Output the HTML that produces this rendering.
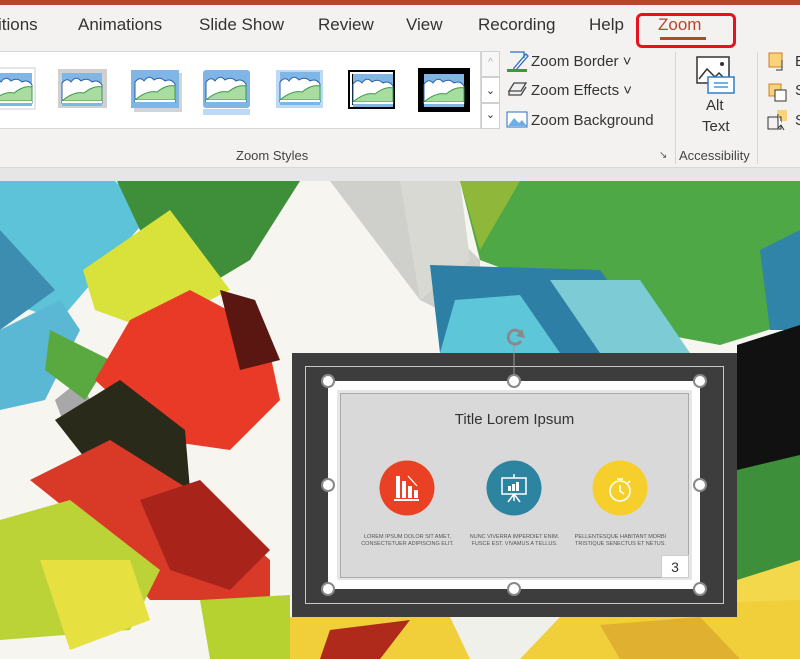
<!DOCTYPE html>
<html><head><meta charset="utf-8"><style>
*{margin:0;padding:0;box-sizing:border-box}
body{width:800px;height:659px;overflow:hidden;background:#f3f2f1;font-family:"Liberation Sans",sans-serif;position:relative}
.a{position:absolute;white-space:nowrap}
.tab{position:absolute;top:15px;font-size:17px;color:#333}
.cmd{position:absolute;font-size:15px;color:#333}
</style></head><body>
<div class="a" style="left:0;top:0;width:800px;height:5px;background:#b7472a"></div>
<div class="tab" style="left:-2px">itions</div>
<div class="tab" style="left:78px">Animations</div>
<div class="tab" style="left:199px">Slide Show</div>
<div class="tab" style="left:318px">Review</div>
<div class="tab" style="left:406px">View</div>
<div class="tab" style="left:478px">Recording</div>
<div class="tab" style="left:589px">Help</div>
<div class="tab" style="left:658px;color:#b7472a">Zoom</div>
<div class="a" style="left:660px;top:37px;width:46px;height:3px;background:#b7472a"></div>
<div class="a" style="left:636px;top:13px;width:100px;height:35px;border:3px solid #e8121e;border-radius:6px"></div>

<div class="a" style="left:-2px;top:51px;width:483px;height:78px;background:#fff;border:1px solid #d6d6d6"></div>
<div class="a" style="left:481px;top:51px;width:19px;height:26px;border:1px solid #d0d0d0;background:#f7f7f7;font-size:10px;color:#aaa;text-align:center;line-height:22px">^</div>
<div class="a" style="left:481px;top:77px;width:19px;height:26px;border:1px solid #d0d0d0;background:#fff;font-size:11px;color:#333;text-align:center;line-height:26px">&#8964;</div>
<div class="a" style="left:481px;top:103px;width:19px;height:26px;border:1px solid #d0d0d0;background:#fff;font-size:11px;color:#333;text-align:center;line-height:22px">&#8964;</div>
<svg class="a" style="left:0;top:50px" width="480" height="80" viewBox="0 50 480 80">
<defs><g id="pic"><rect x="0" y="0" width="40" height="30" fill="#7fb6e6"/><path d="M0 10 Q5 4 9 9 Q14 2 19 8 Q25 4 30 9 Q36 6 40 12 L40 30 L0 30Z" fill="#fff" stroke="#2a5fa8" stroke-width="1"/><path d="M0 28 Q12 18 22 20 Q32 12 40 14 L40 28Z" fill="#a9dca0" stroke="#3a9a4a" stroke-width="1"/><rect x="0" y="28" width="40" height="2" fill="#fff"/><rect x="0" y="30" width="40" height="3" fill="#7fb6e6"/></g></defs>
<rect x="-4" y="68" width="39" height="41" fill="#fff" stroke="#ccc"/><use href="#pic" x="-8" y="73"/>
<rect x="58" y="69" width="49" height="39" fill="#d0d0d0"/><use href="#pic" x="62" y="73"/>
<rect x="134" y="73" width="48" height="39" fill="#aaa" opacity=".5"/><rect x="131" y="70" width="48" height="38" fill="#7fb6e6"/><use href="#pic" x="135" y="72"/>
<rect x="203" y="70" width="47" height="38" rx="3" fill="#7fb6e6"/><use href="#pic" x="206" y="72"/><rect x="203" y="109" width="47" height="6" fill="#bcd9f5"/>
<rect x="276" y="70" width="47" height="38" fill="#bcd9f5"/><use href="#pic" x="280" y="72"/>
<rect x="348" y="70" width="47" height="39" fill="#000"/><rect x="350" y="72" width="43" height="35" fill="#fff"/><rect x="352" y="74" width="39" height="31" fill="#000"/><use href="#pic" x="353" y="74"/>
<rect x="418" y="68" width="52" height="44" fill="#000"/><use href="#pic" x="424" y="74"/>
</svg>
<svg class="a" style="left:506px;top:50px" width="24" height="80"><path d="M4 2 L18 2 L18 8 M8 18 L20 4 L22 6 L10 20 L7 21Z" fill="none" stroke="#2a6fc0" stroke-width="1.3"/><rect x="1" y="19" width="20" height="3" fill="#3a9a3a"/><path d="M3 41 L8 33 L20 33 L15 41Z M3 41 L3 45 L15 45 L20 37" fill="#eee" stroke="#444" stroke-width="1.3"/><rect x="1" y="62" width="20" height="15" fill="#fff" stroke="#2a6fc0"/><path d="M2 76 L8 68 L13 73 L16 70 L21 76Z" fill="#6ab0e6"/></svg>
<div class="cmd" style="left:531px;top:53px">Zoom Border ˅</div>
<div class="cmd" style="left:531px;top:82px">Zoom Effects ˅</div>
<div class="cmd" style="left:531px;top:112px">Zoom Background</div>
<div class="a" style="left:675px;top:52px;width:1px;height:112px;background:#d6d6d6"></div>
<div class="a" style="left:757px;top:52px;width:1px;height:112px;background:#d6d6d6"></div>
<svg class="a" style="left:695px;top:55px" width="45" height="42"><rect x="2" y="2" width="32" height="26" fill="#fff" stroke="#333" stroke-width="1.5"/><path d="M4 24 L12 14 L20 22 L24 18 L32 26" fill="none" stroke="#333" stroke-width="1.5"/><circle cx="27" cy="9" r="2" fill="#333"/><rect x="13" y="22" width="26" height="16" fill="#fff" stroke="#2a7fd0" stroke-width="1.5"/><path d="M19 28h14M19 32h14" stroke="#2a7fd0" stroke-width="1.3"/></svg>
<div class="cmd" style="left:706px;top:97px">Alt</div>
<div class="cmd" style="left:702px;top:118px">Text</div>
<svg class="a" style="left:766px;top:50px" width="34" height="85"><rect x="3" y="3" width="13" height="14" fill="#f9d27a" stroke="#d08020"/><path d="M16 10v10h-6" fill="none" stroke="#333"/><rect x="3" y="34" width="12" height="12" fill="#f9d27a" stroke="#d08020"/><rect x="9" y="40" width="11" height="11" fill="#fff" stroke="#333"/><rect x="11" y="60" width="10" height="11" fill="#f9d27a"/><rect x="2" y="67" width="13" height="12" fill="none" stroke="#333"/><path d="M12 64 L12 78 L15 75 L18 80" fill="#fff" stroke="#333"/></svg>
<div class="a" style="left:795px;top:53px;font-size:15px;color:#333">B</div>
<div class="a" style="left:795px;top:82px;font-size:15px;color:#333">S</div>
<div class="a" style="left:795px;top:112px;font-size:15px;color:#333">S</div>
<div class="a" style="left:236px;top:148px;font-size:13px;color:#444">Zoom Styles</div>
<div class="a" style="left:659px;top:150px;font-size:10px;color:#555">&#8600;</div>
<div class="a" style="left:679px;top:148px;font-size:13px;color:#444">Accessibility</div>
<div class="a" style="left:0;top:167px;width:800px;height:14px;background:#e6e6e6;border-top:1px solid #d8d8d8"></div>

<svg class="a" style="left:0;top:181px" width="800" height="478" viewBox="0 181 800 478">
<rect x="0" y="181" width="800" height="478" fill="#f6f5f0"/>
<polygon points="330,181 400,181 480,260 480,330 420,300" fill="#cfcfcb"/>
<polygon points="0,181 115,181 150,215 60,320 0,300" fill="#5cc3d8"/>
<polygon points="0,230 55,290 0,330" fill="#3d8db0"/>
<polygon points="0,330 60,300 80,330 45,400 0,410" fill="#5bb8d4"/>
<polygon points="55,400 80,380 100,420 70,440" fill="#a8a8a8"/>
<polygon points="117,181 300,181 250,260 200,290 140,230" fill="#3f8f3a"/>
<polygon points="83,270 170,210 200,250 230,290 150,330 95,310" fill="#d8e23a"/>
<polygon points="50,330 110,360 85,400 45,370" fill="#5aa840"/>
<polygon points="130,320 190,290 265,330 280,400 230,450 160,440 95,380" fill="#e83a26"/>
<polygon points="220,290 255,300 280,360 240,370" fill="#5a1610"/>
<polygon points="55,420 120,380 185,430 190,490 110,490" fill="#2a2a1a"/>
<polygon points="30,480 110,440 190,490 270,560 270,600 150,600 80,520" fill="#d93a28"/>
<polygon points="140,500 200,480 270,550 230,590 170,570" fill="#a8241a"/>
<polygon points="0,520 70,500 160,570 130,630 0,640" fill="#bcd338"/>
<polygon points="40,560 130,560 150,620 70,650" fill="#e6e040"/>
<polygon points="200,600 290,595 290,659 210,659" fill="#b5d230"/>
<polygon points="400,181 460,181 470,260 420,300" fill="#d9d9d4"/>
<polygon points="460,181 800,181 800,320 720,345 640,330 560,290 480,260" fill="#4da845"/>
<polygon points="460,181 520,181 480,250" fill="#8fb83a"/>
<polygon points="430,265 600,270 660,353 440,353" fill="#2e7fa6"/>
<polygon points="455,300 520,295 560,353 440,353" fill="#5ec6d9"/>
<polygon points="550,280 640,280 690,353 600,353" fill="#7ccbd5"/>
<polygon points="760,250 800,230 800,330 770,330" fill="#2f84a8"/>
<polygon points="737,345 800,325 800,470 737,480" fill="#111"/>
<polygon points="737,470 800,455 800,580 737,580" fill="#3e8f3a"/>
<polygon points="737,580 800,560 800,659 737,659" fill="#f2d84a"/>
<polygon points="290,617 800,600 800,659 290,659" fill="#f0cf3a"/>
<polygon points="450,617 560,617 520,659 470,659" fill="#f0f0ea"/>
<polygon points="330,630 410,620 380,659 320,659" fill="#b02a1c"/>
<polygon points="600,625 700,617 740,659 620,659" fill="#e0b030"/>
</svg>

<div class="a" style="left:292px;top:353px;width:445px;height:264px;background:#3d3d3d"></div>
<div class="a" style="left:305px;top:366px;width:419px;height:238px;border:1px solid #c8c8c8"></div>
<div class="a" style="left:328px;top:381px;width:372px;height:208px;background:#fff"></div>
<div class="a" style="left:337px;top:390px;width:355px;height:190px;background:#e6e6e6"></div>
<div class="a" style="left:340px;top:393px;width:349px;height:185px;background:#d9d9d9;border:1px solid #a9a9a9"></div>
<div class="a" style="left:340px;top:411px;width:349px;text-align:center;font-size:15px;color:#333">Title Lorem Ipsum</div>
<svg class="a" style="left:290px;top:320px" width="450" height="290" viewBox="290 320 450 290">
<circle cx="407" cy="488" r="27.5" fill="#ea4124"/>
<circle cx="514" cy="488" r="27.5" fill="#2d84a0"/>
<circle cx="620" cy="488" r="27.5" fill="#f6cf2c"/>
<g fill="#fff"><rect x="396" y="476" width="4" height="22"/><rect x="402" y="481" width="4" height="17"/><rect x="408" y="486" width="4" height="12"/><rect x="414" y="490" width="4" height="8"/><rect x="394" y="499" width="25" height="2"/></g>
<path d="M408 476 L417 486" stroke="#fff" stroke-width="1.3"/>
<g stroke="#fff" stroke-width="1.5" fill="none"><rect x="502" y="478" width="24" height="16"/><path d="M514 474v4 M514 494l-6 8 M514 494l6 8 M514 494v7"/></g>
<g fill="#fff"><rect x="508" y="486" width="3" height="5"/><rect x="512" y="484" width="3" height="7"/><rect x="516" y="482" width="3" height="9"/></g>
<g stroke="#fff" stroke-width="1.6" fill="none"><circle cx="620" cy="491" r="10"/><path d="M620 479v2 M617 479h6 M620 485v6l4 3 M628 483l2-2"/></g>
<g fill="#fff" stroke="#888" stroke-width="2"><circle cx="328" cy="381" r="6"/><circle cx="514" cy="381" r="6"/><circle cx="700" cy="381" r="6"/><circle cx="328" cy="485" r="6"/><circle cx="700" cy="485" r="6"/><circle cx="328" cy="589" r="6"/><circle cx="514" cy="589" r="6"/><circle cx="700" cy="589" r="6"/></g>
<path d="M514 345v30" stroke="#999" stroke-width="1"/>
<path d="M520 332 A7 7 0 1 0 521 341" fill="none" stroke="#8a8a8a" stroke-width="3"/>
<path d="M516 336 L525 338 L522 329Z" fill="#8a8a8a"/>
</svg>
<div class="a" style="left:355px;top:534px;width:105px;text-align:center;font-size:5.5px;line-height:7px;color:#555">LOREM IPSUM DOLOR SIT AMET,<br>CONSECTETUER ADIPISCING ELIT.</div>
<div class="a" style="left:462px;top:534px;width:105px;text-align:center;font-size:5.5px;line-height:7px;color:#555">NUNC VIVERRA IMPERDIET ENIM.<br>FUSCE EST. VIVAMUS A TELLUS.</div>
<div class="a" style="left:568px;top:534px;width:105px;text-align:center;font-size:5.5px;line-height:7px;color:#555">PELLENTESQUE HABITANT MORBI<br>TRISTIQUE SENECTUS ET NETUS.</div>
<div class="a" style="left:661px;top:555px;width:28px;height:23px;background:#fff;border:1px solid #ccc;font-size:14px;color:#333;text-align:center;line-height:22px">3</div>
</body></html>
